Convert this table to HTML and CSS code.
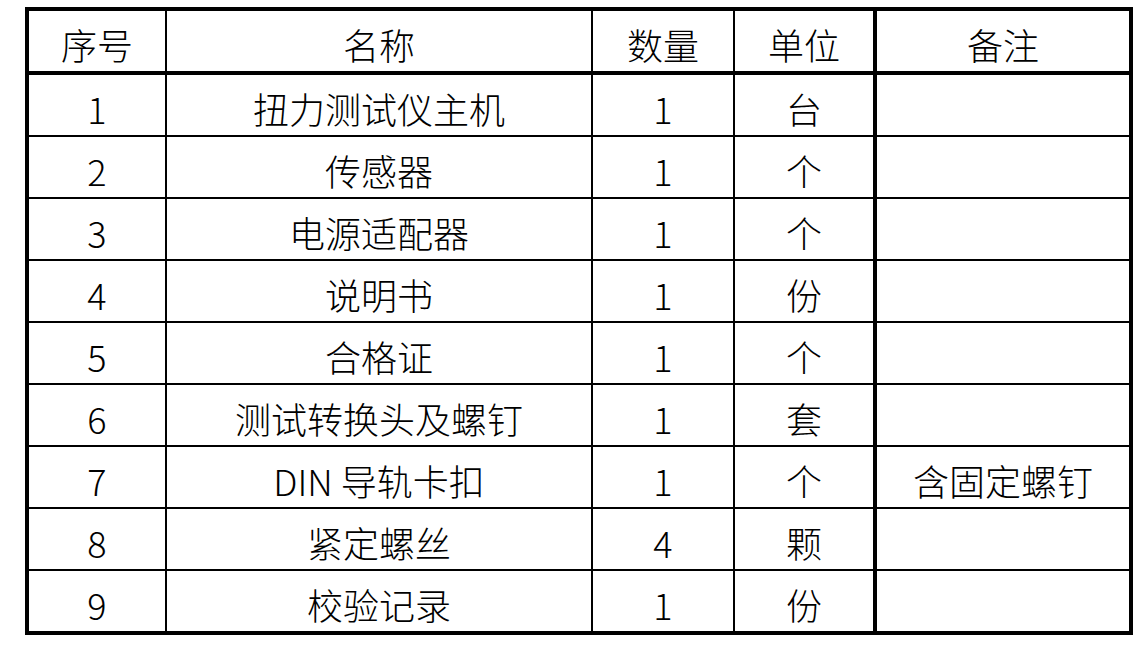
FILE: index.html
```html
<!DOCTYPE html>
<html lang="zh-CN">
<head>
<meta charset="utf-8">
<title>装箱清单</title>
<link rel="stylesheet" href="styles.css">
</head>
<body>
<div class="sheet" role="table">
  <div class="row head" role="row">
    <div class="cell c1">序号</div><div class="cell c2">名称</div><div class="cell c3">数量</div><div class="cell c4">单位</div><div class="cell c5">备注</div>
  </div>
  <div class="row" role="row">
    <div class="cell c1">1</div><div class="cell c2">扭力测试仪主机</div><div class="cell c3">1</div><div class="cell c4">台</div><div class="cell c5"></div>
  </div>
  <div class="row" role="row">
    <div class="cell c1">2</div><div class="cell c2">传感器</div><div class="cell c3">1</div><div class="cell c4">个</div><div class="cell c5"></div>
  </div>
  <div class="row" role="row">
    <div class="cell c1">3</div><div class="cell c2">电源适配器</div><div class="cell c3">1</div><div class="cell c4">个</div><div class="cell c5"></div>
  </div>
  <div class="row" role="row">
    <div class="cell c1">4</div><div class="cell c2">说明书</div><div class="cell c3">1</div><div class="cell c4">份</div><div class="cell c5"></div>
  </div>
  <div class="row" role="row">
    <div class="cell c1">5</div><div class="cell c2">合格证</div><div class="cell c3">1</div><div class="cell c4">个</div><div class="cell c5"></div>
  </div>
  <div class="row" role="row">
    <div class="cell c1">6</div><div class="cell c2">测试转换头及螺钉</div><div class="cell c3">1</div><div class="cell c4">套</div><div class="cell c5"></div>
  </div>
  <div class="row" role="row">
    <div class="cell c1">7</div><div class="cell c2">DIN 导轨卡扣</div><div class="cell c3">1</div><div class="cell c4">个</div><div class="cell c5">含固定螺钉</div>
  </div>
  <div class="row" role="row">
    <div class="cell c1">8</div><div class="cell c2">紧定螺丝</div><div class="cell c3">4</div><div class="cell c4">颗</div><div class="cell c5"></div>
  </div>
  <div class="row last" role="row">
    <div class="cell c1">9</div><div class="cell c2">校验记录</div><div class="cell c3">1</div><div class="cell c4">份</div><div class="cell c5"></div>
  </div>
</div>
</body>
</html>
```
FILE: styles.css
```css
html, body {
  margin: 0;
  padding: 0;
  background: #ffffff;
}

body {
  padding: 7px 0 0 25px;
  font-family: "Noto Sans CJK SC", "Noto Sans", sans-serif;
  color: #000000;
}

.sheet {
  width: 1108px;
  box-sizing: border-box;
  border: 4px solid #000000;
}

.row {
  display: grid;
  grid-template-columns: 138px 426px 142px 142px 252px;
  height: 62px;
  box-sizing: border-box;
  border-bottom: 2px solid #000000;
}

.row.head {
  height: 64px;
  border-bottom-width: 4px;
}

.row.last {
  height: 60px;
  border-bottom: none;
}

.cell {
  box-sizing: border-box;
  border-right: 2px solid #000000;
  display: flex;
  align-items: center;
  justify-content: center;
  padding-top: 6px;
  font-size: 36px;
  font-weight: 300;
  line-height: 1;
  white-space: nowrap;
}

.cell.c4 {
  border-right-width: 4px;
}

.cell.c5 {
  border-right: none;
}
```
